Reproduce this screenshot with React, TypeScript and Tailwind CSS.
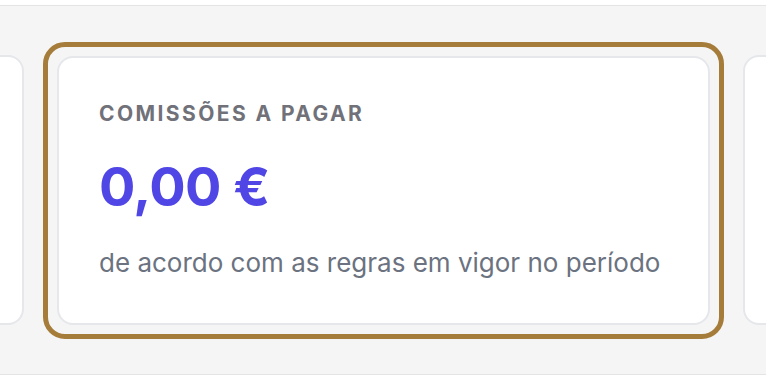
export default function App() {
  return (
    <div className="w-[766px] h-[380px] bg-white" style={{ fontFamily: 'Inter, "Noto Sans", sans-serif' }}>
      <div className="mt-[5px] h-[370px] border-y border-[#e4e4e7] bg-[#f5f5f5] overflow-hidden flex items-center gap-[19px] -ml-[100px]">
        {/* left card (cut off) */}
        <div className="shrink-0 w-[124px] h-[270px] bg-white border-2 border-[#e5e7eb] rounded-[16px]" />

        {/* highlighted card */}
        <div className="shrink-0 w-[681px] h-[297px] border-[5px] border-[#a67c3a] rounded-[22px] p-[9px]">
          <div className="w-full h-full bg-white border-2 border-[#e5e7eb] rounded-[16px] pl-[40px] pt-[42px]">
            <div className="text-[21px] font-bold tracking-[0.115em] text-[#71717a] leading-[28px]">
              COMISSÕES A PAGAR
            </div>
            <div className="mt-[27px] text-[54px] font-bold text-[#4f46e5] leading-[64px] tracking-[-0.01em]">
              0,00 €
            </div>
            <div className="mt-[28px] text-[26px] text-[#6b7280] leading-[32px]">
              de acordo com as regras em vigor no período
            </div>
          </div>
        </div>

        {/* right card (cut off) */}
        <div className="shrink-0 w-[124px] h-[270px] bg-white border-2 border-[#e5e7eb] rounded-[16px]" />
      </div>
    </div>
  );
}
